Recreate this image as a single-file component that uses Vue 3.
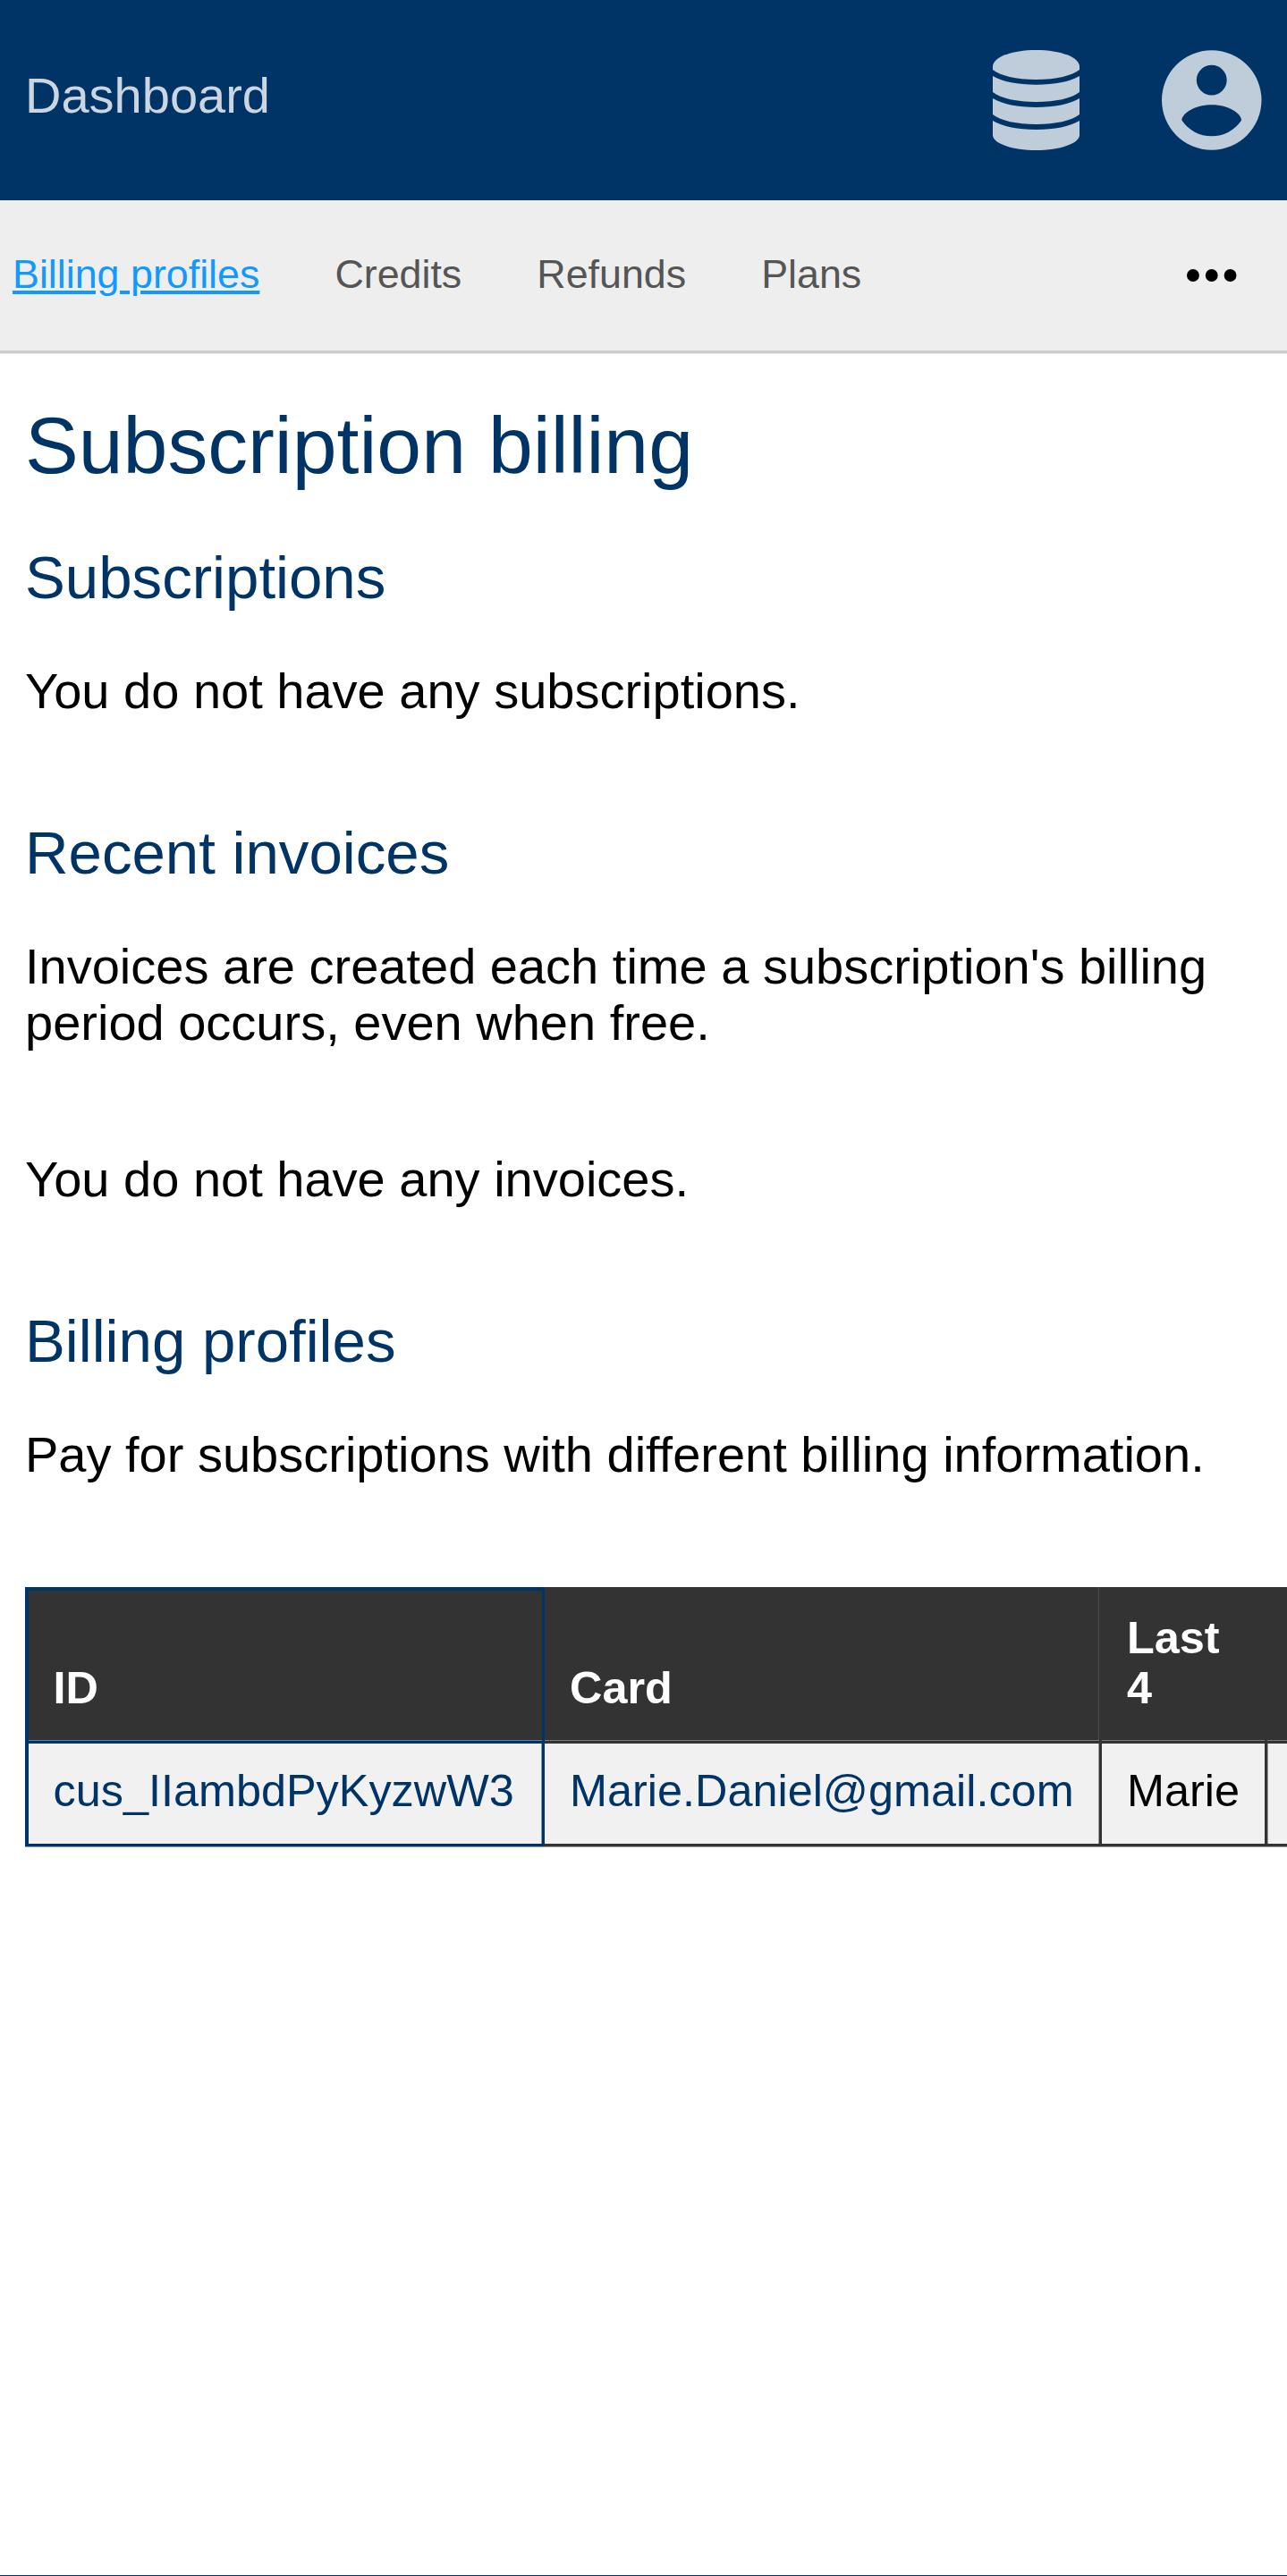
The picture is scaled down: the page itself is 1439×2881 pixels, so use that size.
<script setup>
const links = ['Billing profiles', 'Credits', 'Refunds', 'Plans']
</script>

<template>
  <div class="page">
    <header class="topbar">
      <a class="brand">Dashboard</a>
      <div class="icons">
        <svg class="db" viewBox="0 0 97 112">
          <path d="M0 18.5C0 8 21 0 48.500 0S97 8 97 18.500V22C89 28.500 71 33 48.500 33S8 28.500 0 22Z" />
          <path d="M0 29C11 35.500 28 38.700 48.500 38.700S86 35.500 97 29V47C88 54 70 58 48.500 58S9 54 0 47Z" />
          <path d="M0 54C11 60.500 28 63.900 48.500 63.900S86 60.500 97 54V72C88 79 70 83 48.500 83S9 79 0 72Z" />
          <path d="M0 79C11 85.500 28 89 48.500 89S86 85.500 97 79V95C97 104.500 75 112 48.500 112S0 104.500 0 95Z" />
        </svg>
        <svg class="user" viewBox="0 0 112 112">
          <path fill-rule="evenodd" d="M56 0a56 56 0 1 0 0 112a56 56 0 1 0 0-112ZM56 16.500a17 17 0 1 1 0 34a17 17 0 1 1 0-34ZM56 61.200C77 61.200 89.500 72 89.500 78.500C82 89.800 69.500 96.500 56 96.500S30 89.800 22.500 78.500C22.500 72 35 61.200 56 61.200Z" />
        </svg>
      </div>
    </header>
    <nav class="nav">
      <a v-for="(l, i) in links" :key="l" :class="{ active: i === 0 }">{{ l }}</a>
      <svg class="more" viewBox="0 0 56 14">
        <circle cx="7" cy="7" r="7" /><circle cx="28" cy="7" r="7" /><circle cx="49" cy="7" r="7" />
      </svg>
    </nav>
    <main>
      <h1>Subscription billing</h1>
      <section>
        <h2>Subscriptions</h2>
        <p>You do not have any subscriptions.</p>
      </section>
      <section>
        <h2>Recent invoices</h2>
        <p>Invoices are created each time a subscription's billing period occurs, even when free.</p>
        <p class="empty">You do not have any invoices.</p>
      </section>
      <section>
        <h2>Billing profiles</h2>
        <p>Pay for subscriptions with different billing information.</p>
      </section>
      <table>
        <colgroup><col class="c1" /><col class="c2" /><col class="c3" /><col class="c4" /></colgroup>
        <thead>
          <tr><th class="own">ID</th><th class="card">Card</th><th>Last 4</th><th></th></tr>
        </thead>
        <tbody>
          <tr><td class="own"><a>cus_IIambdPyKyzwW3</a></td><td class="card"><a>Marie.Daniel@gmail.com</a></td><td>Marie</td><td class="rest"></td></tr>
        </tbody>
      </table>
    </main>
  </div>
</template>

<style>
body { margin: 0; background: #fff; }
</style>

<style scoped>
.page {
  box-sizing: border-box;
  width: 1439px;
  height: 2881px;
  overflow: hidden;
  display: flex;
  flex-direction: column;
  border-bottom: 1px solid #003366;
  font-family: "Liberation Sans", Arial, sans-serif;
  font-size: 56px;
  line-height: 63px;
  color: #000;
  background: #fff;
}
.topbar {
  flex: none;
  box-sizing: border-box;
  height: 224px;
  padding: 0 28.5px 0 28px;
  display: flex;
  align-items: center;
  justify-content: space-between;
  background: #003366;
}
.brand { color: #ccd6e0; padding-bottom: 11px; }
.icons { display: flex; align-items: center; gap: 92px; fill: #bfccd9; }
.db { width: 97px; height: 112px; }
.user { width: 111.5px; height: 112px; }
.nav {
  flex: none;
  height: 168px;
  padding: 0 56.5px 0 14px;
  display: flex;
  align-items: center;
  gap: 84px;
  background: #eee;
  border-bottom: 3px solid #ccc;
  box-shadow: 0 1px #e5e5e5;
  font-size: 44.8px;
  color: #555;
}
.nav a { line-height: 51px; padding-bottom: 3px; }
.nav .active { color: #1199ff; text-decoration: underline; }
.more { width: 55.5px; height: 14px; margin-left: auto; }
main { padding: 53px 28px 0; }
h1, h2 { margin: 0; font-weight: 400; color: #003366; }
h1 { font-size: 89.6px; line-height: 100px; }
h2 { font-size: 67.2px; line-height: 75px; margin: 60px 0 58px; }
p { margin: 0; }
section + section { margin-top: 112px; }
.empty { margin-top: 112px; }
table {
  margin-top: 117px;
  width: 1600px;
  table-layout: fixed;
  border-collapse: separate;
  border-spacing: 0;
  font-size: 50.4px;
  line-height: 56px;
}
.c1 { width: 581px; }
.c2 { width: 623px; }
.c3 { width: 185px; }
th, td {
  box-sizing: border-box;
  padding: 0 28px;
  border: 0 solid #333;
  border-width: 0 3px 3px 0;
  text-align: left;
}
th {
  height: 175px;
  padding-bottom: 31px;
  vertical-align: bottom;
  color: #fff;
  background: #333;
  box-shadow: inset 0 -1px #777;
}
th.card { box-shadow: inset 0 -1px #777, inset -1px 0 #4c4c4c; }
td {
  height: 115px;
  padding-top: 24px;
  vertical-align: top;
  line-height: 57px;
  background: #f1f1f1;
  box-shadow: 0 1px #999;
}
td.card { box-shadow: inset -1px 0 #999, 0 1px #999; }
td.rest { box-shadow: inset 1px 0 #999, 0 1px #999; }
.own { border-color: #003366; border-left-width: 4px; padding-left: 27.5px; }
th.own { border-top: 4px solid #003366; box-shadow: inset 0 -1px #668099; }
td.own { box-shadow: inset -1px 0 #8099b3, 0 1px #8099b3; }
td a { color: #003366; }
</style>
